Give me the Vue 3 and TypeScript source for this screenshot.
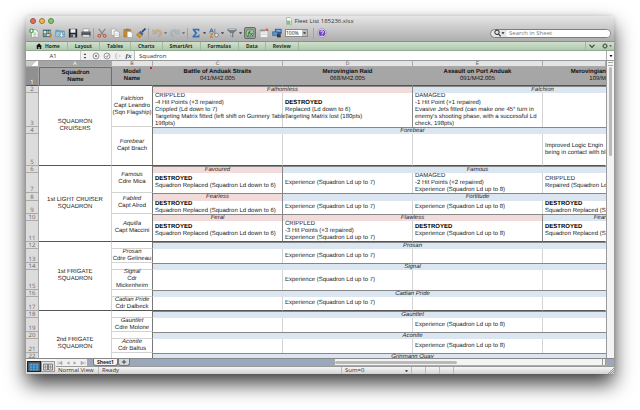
<script setup lang="ts">
import { ref } from 'vue'

interface Cell {
  lines: string[]
  kind: 'squadron' | 'model' | 'note' | 'pink' | 'blue'
  rows?: number
  cols?: number
  edge?: boolean
}
interface Row {
  n: number
  h: number
  heavy?: boolean
  cells: Cell[]
}

const squadron = (rows: number, ...lines: string[]): Cell => ({ lines, kind: 'squadron', rows })
const model = (rows: number, ...lines: string[]): Cell => ({ lines, kind: 'model', rows })
const note = (...lines: string[]): Cell => ({ lines, kind: 'note' })
const edged = (...lines: string[]): Cell => ({ lines, kind: 'note', edge: true })
const pink = (name: string, cols = 1): Cell => ({ lines: [name], kind: 'pink', cols, edge: true })
const blue = (name: string, cols = 4): Cell => ({ lines: [name], kind: 'blue', cols })

const D = 'DESTROYED'
const lost = 'Squadron Replaced (Squadron Ld down to 6)'
const lostShort = 'Squadron Replaced (S'
const up7 = 'Experience (Squadron Ld up to 7)'
const up8 = 'Experience (Squadron Ld up to 8)'

const rows: Row[] = [
  { n: 2, h: 7, cells: [squadron(4, 'SQUADRON', 'CRUISERS'), model(2, 'Falchion', 'Capt Leandro', '(Sqn Flagship)'), pink('Fathomless', 2), blue('Falchion', 2)] },
  { n: 3, h: 34, cells: [
    note('CRIPPLED', '-4 Hit Points (+3 repaired)', 'Crippled (Ld down to 7)', 'Targeting Matrix fitted (left shift on Gunnery Table,', '198pts)'),
    edged(D, 'Replaced (Ld down to 6)', 'Targeting Matrix lost (180pts)'),
    note('DAMAGED', '-1 Hit Point (+1 repaired)', 'Evasive Jets fitted (can make one 45° turn in', "enemy's shooting phase, with a successful Ld", 'check, 198pts)'),
    note()] },
  { n: 4, h: 7, cells: [model(2, 'Forebear', 'Capt Brach'), blue('Forebear')] },
  { n: 5, h: 32, heavy: true, cells: [note(), note(), note(), note('Improved Logic Engin', 'being in contact with bl')] },
  { n: 6, h: 7, cells: [squadron(6, '1st LIGHT CRUISER', 'SQUADRON'), model(2, 'Famous', 'Cdre Mica'), pink('Favoured'), blue('Famous', 3)] },
  { n: 7, h: 20, cells: [edged(D, lost), note(up7), note('DAMAGED', '-2 Hit Points (+2 repaired)', up8), note('CRIPPLED', 'Repaired (Squadron Ld')] },
  { n: 8, h: 8, cells: [model(2, 'Fabled', 'Capt Alrod'), pink('Fearless'), blue('Fortitude', 3)] },
  { n: 9, h: 13, cells: [edged(D, lost), note(up7), note(up8), note(D, lostShort)] },
  { n: 10, h: 7, cells: [model(2, 'Aquilla', 'Capt Maccini'), pink('Feral'), pink('Flawless', 2), { ...blue('Fear', 1), edge: true }] },
  { n: 11, h: 21, heavy: true, cells: [edged(D, lost), note('CRIPPLED', '-3 Hit Points (+3 repaired)', up7), edged(D, up8), note(D, lostShort)] },
  { n: 12, h: 7, cells: [squadron(6, '1st FRIGATE', 'SQUADRON'), model(1), blue('Prosan')] },
  { n: 13, h: 14, cells: [model(1, 'Prosan', 'Cdre Gelineau'), note(), note(up7), note(), note()] },
  { n: 14, h: 7, cells: [model(1), blue('Signal')] },
  { n: 15, h: 20, cells: [model(1, 'Signal', 'Cdr', 'Mickenheim'), note(), note(up7), note(), note()] },
  { n: 16, h: 7, cells: [model(1), blue('Cadian Pride')] },
  { n: 17, h: 14, heavy: true, cells: [model(1, 'Cadian Pride', 'Cdr Dalbeck'), note(), note(up7), note(), note()] },
  { n: 18, h: 7, cells: [squadron(5, '2nd FRIGATE', 'SQUADRON'), model(1), blue('Gauntlet')] },
  { n: 19, h: 14, cells: [model(1, 'Gauntlet', 'Cdre Molone'), note(), note(), note(up8), note()] },
  { n: 20, h: 7, cells: [model(1), blue('Aconite')] },
  { n: 21, h: 14, cells: [model(1, 'Aconite', 'Cdr Baltus'), note(), note(), note(up8), note()] },
  { n: 22, h: 24, cells: [model(1), blue('Grinmann Quay')] },
]

const tabs = ['Home', 'Layout', 'Tables', 'Charts', 'SmartArt', 'Formulas', 'Data', 'Review']
const heavyEnds = [4, 6]
const isHeavy = (row: Row, cell: Cell) =>
  row.heavy
  || (cell.kind === 'squadron' && heavyEnds.includes(cell.rows ?? 1))
  || (cell.kind === 'model' && [4, 10].includes(row.n))

const nameBox = ref('A1')
const formula = ref('Squadron')
const query = ref('')
</script>

<template>
  <main class="desk">
    <section class="window">
      <header class="chrome">
        <div class="title">
          <div class="lights">
            <button class="light red" aria-label="Close"></button>
            <button class="light amber" aria-label="Minimise"></button>
            <button class="light green" aria-label="Zoom"></button>
          </div>
          <svg class="doc" viewBox="0 0 6 8"><path d="M.5.5h3.5l1.5 1.7v5.3h-5z" fill="#fff" stroke="#8a9a8a" stroke-width=".6" /><path d="M1 3.5h3.5V7H1z" fill="#7fc384" /></svg>
          <h1>Fleet List 185236.xlsx</h1>
        </div>
        <div class="toolbar">
          <button aria-label="New"><svg viewBox="0 0 12 12"><path d="M3 2h5l3 3v6.5H3z" fill="#f7f7f7" stroke="#888" stroke-width=".7" /><path d="M5 6h4M5 8h4M5 10h4M7 5v6" stroke="#9cbf9c" stroke-width=".7" /><circle cx="3" cy="3.4" r="2.8" fill="#41a63c" /><path d="M3 1.8v3.2M1.4 3.4h3.2" stroke="#fff" stroke-width="1" /></svg></button>
          <button aria-label="Templates"><svg viewBox="0 0 12 12"><path d="M1 2h9.5v9H1z" fill="#42667e" /><path d="M2 3.5h3v3H2z" fill="#d6e8f4" /><path d="M5.7 3.5h2v3h-2z" fill="#e9a13b" /><path d="M8.3 3.5h2v3h-2z" fill="#7cb7e0" /><path d="M2 7.3h3v2.5H2z" fill="#79b36b" /><path d="M5.7 7.3h4.5v2.5H5.7z" fill="#c9dceb" /><path d="M9 6l2.5 1v4H9z" fill="#c77e26" /></svg></button>
          <button aria-label="Open"><svg viewBox="0 0 12 12"><path d="M.7 2h4l1 1h5.6v7.5H.7z" fill="#6ea0c2" /><path d="M.7 4.2h10.6v6.3H.7z" fill="#9cc5de" stroke="#5b8cab" stroke-width=".6" /><path d="M6.5 5h2.4v3h1.6L7.7 11.5 5 8h1.5z" fill="#eef6fb" stroke="#47738f" stroke-width=".6" /></svg></button>
          <button aria-label="Save"><svg viewBox="0 0 12 12"><path d="M1 1h10v10.4H1z" fill="#20242c" /><path d="M3 1.4h6v4.3H3z" fill="#e9edf2" /><path d="M3.2 7.5h5.6v3.9H3.2z" fill="#aeb5bd" /><path d="M4 8.2h1.6v2.6H4z" fill="#20242c" /></svg></button>
          <button aria-label="Print"><svg viewBox="0 0 12 12"><path d="M2.6 1h6.8v4H2.6z" fill="#fafafa" stroke="#777" stroke-width=".6" /><path d="M.6 4.4h10.8v4.8H.6z" fill="#34383e" /><path d="M1.4 5.4h9.2v1H1.4z" fill="#9298a0" /><path d="M2 8h8l.8 3H1.2z" fill="#e4e7ea" stroke="#666" stroke-width=".6" /></svg></button>
          <i class="rule"></i>
          <button aria-label="Cut"><svg viewBox="0 0 12 12"><path d="M2 1l5.6 7M10 1L4.4 8" stroke="#858585" stroke-width="1.3" /><circle cx="2.8" cy="9.3" r="1.7" fill="none" stroke="#bd4631" stroke-width="1.2" /><circle cx="9.2" cy="9.3" r="1.7" fill="none" stroke="#bd4631" stroke-width="1.2" /></svg></button>
          <button aria-label="Copy"><svg viewBox="0 0 12 12"><path d="M1.5 1h4.3l2 2v5.8H1.5z" fill="#f3f3f3" stroke="#909090" stroke-width=".7" /><path d="M5 3.6h4l2 2v5.8H5z" fill="#fff" stroke="#858585" stroke-width=".7" /><path d="M6.2 7h3.4M6.2 9h3.4" stroke="#aaa" stroke-width=".6" /></svg></button>
          <button aria-label="Paste"><svg viewBox="0 0 12 12"><path d="M1 1.8h8.4v9H1z" fill="#c98a2d" stroke="#8d5c17" stroke-width=".5" /><path d="M3.3.8h3.8v2.3H3.3z" fill="#7d7d7d" /><path d="M5 4.3h4.3l1.9 1.9v5.3H5z" fill="#fff" stroke="#888" stroke-width=".6" /></svg></button>
          <button aria-label="Format"><svg viewBox="0 0 12 12"><path d="M11.4.6L7 5" stroke="#26467f" stroke-width="2" /><path d="M5.2 3.6L9 7.2 7.3 8.8 3.6 5.2z" fill="#365c9c" /><path d="M3.6 5.2l3.7 3.6-2.8 2.8L.6 8.4z" fill="#d99532" stroke="#825015" stroke-width=".6" /></svg></button>
          <i class="rule"></i>
          <button class="drop faded" aria-label="Undo"><svg viewBox="0 0 12 12"><path d="M1 2l.3 5.400 5-1.300-1.800-1.200C7 3 9.600 4 9.600 6.200c0 1.500-1 2.500-2.200 3l1 1.300C10.500 9.600 11.600 8 11.500 6 11.300 2.400 6.500.600 2.900 3.700z" fill="#d8a860" stroke="#98835c" stroke-width=".5" /></svg><b></b></button>
          <button class="drop faded" aria-label="Redo"><svg viewBox="0 0 12 12"><path d="M11 2l-.3 5.400-5-1.300 1.800-1.200C5 3 2.400 4 2.400 6.200c0 1.500 1 2.500 2.200 3l-1 1.300C1.500 9.600.4 8 .5 6 .7 2.400 5.500.6 9.100 3.700z" fill="#9bc0d4" stroke="#6e8c9c" stroke-width=".5" /></svg><b></b></button>
          <i class="rule"></i>
          <button class="drop" aria-label="AutoSum"><svg viewBox="0 0 12 12"><path d="M2 1h8v2.800H8.800L8.300 2.700H5L7.700 6 4.800 9.400h3.700l.7-1.500h1.200L10 11.300H1.800V10L5 6.200 2 2.300z" fill="#3771b5" /></svg><b></b></button>
          <button class="drop" aria-label="Sort"><svg viewBox="0 0 12 12"><path d="M.8 5.500L3 .6l2.200 4.900M1.600 4h2.800" fill="none" stroke="#3b70b0" stroke-width="1.200" /><path d="M1 7h3.600L1.200 11h3.600" fill="none" stroke="#c5792f" stroke-width="1.200" /><path d="M7 1v6" stroke="#777" /><circle cx="9" cy="8.500" r="2.200" fill="#e5e5e5" stroke="#777" /></svg><b></b></button>
          <button class="drop" aria-label="Filter"><svg viewBox="0 0 12 12"><path d="M.6 1h10.800v2L7.500 6.300v5l-3-1.500V6.300L.6 3z" fill="#6f7a82" /><path d="M2 2h8" stroke="#d5dde2" /><path d="M5.500 6v4" stroke="#cdd6db" /></svg><b></b></button>
          <button class="pressed" aria-label="Formula Builder"><svg viewBox="0 0 12 12"><circle cx="6" cy="6" r="4.800" fill="#9fc79e" stroke="#4b7f4c" stroke-width=".8" /><path d="M2.800 10c1.500.3 1.600-1.500 2-4s1-3 2-2.600M3.600 5.800h2.600M6.300 6l3 3.400M9.300 6L6.100 9.400" fill="none" stroke="#28552b" stroke-width=".9" /></svg></button>
          <button aria-label="Toolbox"><svg viewBox="0 0 12 12"><path d="M1.500 2.600h9v8.800h-9z" fill="#f5f5f5" stroke="#999" stroke-width=".6" /><path d="M1.500 2h6v2h-6z" fill="#8b8b8b" /><path d="M8 .8h3v3H8z" fill="#d5604d" /><path d="M3 6h6M3 8h6" stroke="#c3c3c3" stroke-width=".7" /></svg></button>
          <button aria-label="Media"><svg viewBox="0 0 12 12"><path d="M3.500 1h8v6h-8z" fill="#28558a" /><path d="M4.500 2h6v2.600h-6z" fill="#79b2df" /><path d="M.5 4.500h6.300v4.700H.5z" fill="#5a93c6" stroke="#2d4f78" stroke-width=".6" /><path d="M6 7.300h4.500v4H6z" fill="#343b45" /></svg></button>
          <label class="zoom"><select aria-label="Zoom"><option>100%</option></select><b></b></label>
          <i class="rule"></i>
          <button aria-label="Help"><svg viewBox="0 0 12 12"><circle cx="6" cy="6" r="5.200" fill="#eee9fa" stroke="#777" stroke-width=".6" /><circle cx="6" cy="6" r="4" fill="#6e42c1" /><path d="M4.500 4.900c0-2.200 3.200-2 3.100-.1C7.600 6 6.100 5.900 6.100 7.100M6.100 8v1.100" fill="none" stroke="#fff" stroke-width="1.100" /></svg></button>
          <label class="search">
            <svg viewBox="0 0 12 8"><circle cx="4" cy="3.300" r="2.200" fill="none" stroke="#222" stroke-width="1" /><path d="M5.600 5l2 2.300" stroke="#222" stroke-width="1.100" /><path d="M8.500 3.200h3L10 5.200z" fill="#222" /></svg>
            <input v-model="query" type="text" placeholder="Search in Sheet" aria-label="Search in Sheet">
          </label>
        </div>
      </header>

      <nav class="ribbon">
        <button v-for="tab in tabs" :key="tab">
          <svg v-if="tab === 'Home'" viewBox="0 0 6 6"><path d="M3 .3L6 3.300H5.200V6H3.700V4H2.300v2H.8V3.300H0z" fill="#111" /></svg>{{ tab }}
        </button>
        <button class="end" aria-label="Collapse ribbon"><svg viewBox="0 0 6 6"><path d="M.5 1.600L3 4.400l2.500-2.800" fill="none" stroke="#444" stroke-width="1.100" /></svg></button>
        <button class="gear" aria-label="Ribbon options"><svg viewBox="0 0 10 6"><circle cx="3" cy="3" r="1.700" fill="none" stroke="#444" stroke-width=".8" /><path d="M3 0v1M3 5v1M0 3h1M5 3h1M.9.900l.7.7M4.400 4.400l.7.7M5.100.9l-.7.7M.9 5.100l.7-.7" stroke="#444" stroke-width=".8" /><path d="M7.300 2.300h2.400L8.500 4z" fill="#444" /></svg></button>
      </nav>

      <div class="formula">
        <input v-model="nameBox" class="name" type="text" aria-label="Name box">
        <button class="step" aria-label="Browse names"><svg viewBox="0 0 6 8"><path d="M1.800 3L3 1.200 4.200 3zM1.800 5L3 6.800 4.200 5z" fill="#333" /></svg></button>
        <button aria-label="Cancel"><svg viewBox="0 0 8 8"><circle cx="4" cy="4" r="3" fill="none" stroke="#888" stroke-width=".8" /><path d="M2.800 2.800l2.400 2.400M5.200 2.800L2.800 5.200" stroke="#888" stroke-width=".9" /></svg></button>
        <button aria-label="Enter"><svg viewBox="0 0 8 8"><circle cx="4" cy="4" r="3" fill="none" stroke="#888" stroke-width=".8" /><path d="M2.500 4l1.200 1.300 2-2.800" fill="none" stroke="#888" stroke-width=".9" /></svg></button>
        <button aria-label="Parentheses"><svg viewBox="0 0 8 8"><path d="M3 1a4 4 0 0 0 0 6M4.500 4h2" fill="none" stroke="#aaa" stroke-width=".8" /></svg></button>
        <button class="fx" aria-label="Insert function"><em>fx</em></button>
        <input v-model="formula" class="entry" type="text" aria-label="Formula">
        <button class="more" aria-label="Expand formula bar"><svg viewBox="0 0 6 8"><path d="M1.500 3h3L3 5.200z" fill="#111" /></svg></button>
      </div>

      <div class="body">
        <div class="sheet">
          <table>
            <colgroup><col class="c0"><col class="cA"><col class="cB"><col class="cN"><col class="cN"><col class="cN"><col></colgroup>
            <thead>
              <tr class="letters"><th class="corner"></th><th class="on">A</th><th>B</th><th>C</th><th>D</th><th>E</th><th></th></tr>
              <tr class="heads">
                <th class="num on">1</th>
                <th class="active"><div class="txt">Squadron<br>Name</div></th>
                <th class="flag"><div class="txt">Model<br>Name</div></th>
                <th><div class="txt">Battle of Anduak Straits<br><span>041/M42.005</span></div></th>
                <th><div class="txt">Merovingian Raid<br><span>068/M42.005</span></div></th>
                <th><div class="txt">Assault on Port Anduak<br><span>091/M42.005</span></div></th>
                <th class="partial"><div class="txt">Merovingian<br><span>109/M</span></div></th>
              </tr>
            </thead>
            <tbody>
              <tr v-for="row in rows" :key="row.n" :style="{ height: row.h + 'px' }">
                <th class="num">{{ row.n }}</th>
                <td
                  v-for="(cell, i) in row.cells" :key="i"
                  :rowspan="cell.rows ?? 1" :colspan="cell.cols ?? 1"
                  :class="[cell.kind, { edge: cell.edge, heavy: isHeavy(row, cell), onward: cell.kind === 'blue' && cell.cols !== 1, last: cell.kind === 'blue' && cell.cols === 1 }]"
                >
                  <div v-if="cell.lines.length" class="txt">
                    <div v-for="(line, k) in cell.lines" :key="k" :class="{ strong: line === D }">{{ line }}</div>
                  </div>
                </td>
              </tr>
            </tbody>
          </table>
        </div>
        <div class="vscroll"><i class="split"></i><i class="thumb"></i></div>
      </div>

      <footer class="foot">
        <div class="views">
          <button class="view on" aria-label="Normal view"><svg viewBox="0 0 10 8"><path d="M.5.5h9v7h-9z" fill="#4fa3d9" /><path d="M.5 3h9M.5 5.300h9M3.500.5v7M6.500.5v7" stroke="#2b6c9c" stroke-width=".6" /></svg></button>
          <button class="view" aria-label="Page layout"><svg viewBox="0 0 10 8"><path d="M.5 1h4v6h-4zM5.500 1h4v6h-4z" fill="#ddd" stroke="#666" stroke-width=".8" /><path d="M1 4h3M6 4h3M2.500 2v4M7.500 2v4" stroke="#777" stroke-width=".6" /></svg></button>
        </div>
        <div class="rails">
          <div class="tabs">
            <div class="nav">
              <button aria-label="First sheet"><svg viewBox="0 0 6 6"><path d="M1 1.200v3.600M5 1.200L2 3l3 1.800z" fill="#aaa" stroke="#aaa" stroke-width=".6" /></svg></button>
              <button aria-label="Previous sheet"><svg viewBox="0 0 6 6"><path d="M4.500 1.200L1.500 3l3 1.800z" fill="#aaa" /></svg></button>
              <button aria-label="Next sheet"><svg viewBox="0 0 6 6"><path d="M1.500 1.200l3 1.800-3 1.800z" fill="#aaa" /></svg></button>
              <button aria-label="Last sheet"><svg viewBox="0 0 6 6"><path d="M5 1.200v3.600M1 1.200L4 3 1 4.800z" fill="#aaa" stroke="#aaa" stroke-width=".6" /></svg></button>
            </div>
            <button class="tab">Sheet1</button>
            <button class="tab add" aria-label="Add sheet"><svg viewBox="0 0 6 6"><path d="M3 .8v4.400M.8 3h4.400" stroke="#444" stroke-width="1" /></svg></button>
            <div class="hscroll"><i class="thumb"></i><i class="grip"></i></div>
          </div>
          <div class="status">
            <span class="mode">Normal View</span><span class="ready">Ready</span><span class="sum">Sum=0<b></b></span><i></i><i></i><i></i>
            <svg class="resize" viewBox="0 0 6 6"><path d="M0 6l6-6M2 6l4-4M4 6l2-2" stroke="#777" stroke-width=".7" /></svg>
          </div>
        </div>
      </footer>
    </section>
  </main>
</template>

<style>
body { margin: 0; background: #fff; }
</style>

<style scoped>
* { box-sizing: border-box; }
.desk { height: 100vh; padding: 16px 26px 36px; overflow: hidden; background: #fff; font-family: "Open Sans", sans-serif; font-size: 6px; line-height: 8px; color: #333; }
.window { display: flex; flex-direction: column; height: 100%; background: #fff; border-radius: 3px 3px 0 0; box-shadow: 0 10px 20px rgba(0, 0, 0, .75), 0 0 4px rgba(0, 0, 0, .15); }
button { display: flex; align-items: center; justify-content: center; margin: 0; padding: 0; border: 0; background: none; font: inherit; color: inherit; }
input, select { margin: 0; padding: 0; border: 0; border-radius: 0; outline: 0; background: none; font: inherit; color: inherit; min-width: 0; }
svg { display: block; flex: none; }
b { border: 1px solid transparent; border-top: 2px solid #555; border-bottom: 0; flex: none; width: 3px; height: 2px; }

.chrome { flex: none; border-radius: 3px 3px 0 0; background: linear-gradient(#e6e6e6, #cfcfcf 40%, #aeaeae); border-bottom: 1px solid #8d8d8d; }
.title { display: grid; grid-template-columns: 1fr auto auto 1fr; align-items: center; height: 10px; column-gap: 2px; }
h1 { margin: 0; font-size: 6px; font-weight: 400; line-height: 10px; color: #333; }
.lights { display: flex; gap: 3px; padding-left: 4px; }
.light { width: 6px; height: 6px; border-radius: 50%; border: 1px solid #8b5a52; }
.red { background: #f0665d; }
.amber { background: #f5b64b; border-color: #9c7538; }
.green { background: #86c765; border-color: #5b8748; }
.doc { width: 6px; height: 8px; }
.toolbar { display: flex; align-items: center; gap: 2px; height: 15px; padding: 0 3px 1px 2px; }
.toolbar button svg { width: 10px; height: 10px; }
.toolbar button { flex: none; width: 11px; height: 12px; }
.toolbar .drop { width: 16px; gap: 2px; }
.faded { opacity: .65; }
.toolbar .pressed { width: 12px; background: #9b9b9b; border: 1px solid #6c6c6c; border-radius: 2px; }
.rule { flex: none; width: 1px; height: 11px; background: #a4a4a4; }
.zoom { display: flex; align-items: center; width: 23px; height: 8px; margin: 0 3px 0 1px; padding-right: 1px; border: 1px solid #8a8a8a; background: linear-gradient(90deg, #fff 16px, #bbb 16px); }
.zoom select { appearance: none; flex: 1; width: 16px; height: 6px; font-size: 5px; line-height: 6px; color: #222; }
.search { display: flex; align-items: center; width: 121px; height: 9px; margin-left: auto; padding-left: 2px; border: 1px solid #7d7d7d; border-radius: 5px; background: #e6e6e6; }
.search svg { width: 12px; height: 8px; }
.search input { flex: 1; height: 7px; margin-left: 1px; padding-left: 3px; border-radius: 4px; background: #fff; line-height: 7px; }
.search input::placeholder { color: #777; opacity: 1; }

.ribbon { flex: none; display: flex; height: 9px; padding-left: 3px; background: linear-gradient(#cfe0cd, #aec9ac); border-bottom: 1px solid #93a892; font-size: 5px; font-weight: 700; color: #263026; }
.ribbon button { padding: 0 7px; gap: 3px; border-right: 1px solid #a2b9a0; }
.ribbon svg { width: 6px; height: 6px; }
.ribbon .end { margin-left: auto; padding: 0 3px; border-left: 1px solid #a2b9a0; border-right: 0; }
.ribbon .gear { padding: 0 2px 0 4px; border: 0; }
.ribbon .gear svg { width: 10px; }

.formula { flex: none; display: flex; height: 10px; background: #f1f1f1; border-bottom: 1px solid #999; }
.formula svg { width: 8px; height: 8px; }
.formula button { width: 11px; }
.name { width: 54px; text-align: center; background: #fff; }
.formula .step { width: 8px; margin-right: 2px; border-left: 1px solid #ccc; }
.fx { font-family: "Liberation Serif", serif; font-weight: 700; font-size: 7px; }
.entry { flex: 1; padding-left: 4px; border-left: 1px solid #bbb; background: #fff; }
.formula .more { width: 8px; border-left: 1px solid #aaa; background: #fff; }

.body { flex: 1; display: flex; min-height: 0; }
.sheet { flex: 1; min-width: 0; overflow: hidden; font-family: "Liberation Sans", sans-serif; line-height: 7px; color: #222; text-rendering: geometricPrecision; }
table { table-layout: fixed; width: 100%; border-collapse: separate; border-spacing: 0; }
.c0 { width: 13px; }
.cA { width: 73px; }
.cB { width: 41px; }
.cN { width: 130px; }
th, td { padding: 0; white-space: nowrap; vertical-align: middle; text-align: center; border-right: 1px solid #d3d3d3; border-bottom: 1px solid #d3d3d3; }
.letters { height: 6px; }
.letters th { height: 6px; padding-top: 1px; background: #e4e4e4; font-size: 5px; line-height: 4px; font-weight: 400; color: #555; border-color: #aaa; }
.letters .on { background: #a5a5a5; color: #fff; }
.letters .corner { background: linear-gradient(135deg, #ccc 60%, #fff 60%); }
.heads { height: 19px; }
.heads th { background: #a6a6a6; color: #111; border-right-color: #a6a6a6; border-bottom: 1px solid #555; }
.heads span { font-weight: 400; }
.heads .active { border: 1px solid #4a6fc4; }
.heads .partial { text-align: right; border-right: 0; }
.flag { position: relative; }
.flag::after { content: ""; position: absolute; top: 0; right: 0; border: 1px solid #e02020; }
.num { vertical-align: bottom; background: #dcdcdc; border-color: #aaa; font-family: "Open Sans", sans-serif; font-weight: 400; line-height: 6px; color: #666; }
.heads .num.on { background: #909090; color: #fff; }
tbody tr:last-child .num { vertical-align: top; }
.txt { margin: -1px 0; }
.note { text-align: left; padding-left: 2px; border-bottom: 0; }
.note:last-child { border-right-color: transparent; }
.model { border-right-color: #777; }
.model .txt > :first-child { font-style: italic; }
.pink, .blue { vertical-align: top; font-style: italic; border-bottom: 0; border-top: 1px solid #888; }
.pink .txt, .blue .txt { margin: 0 0 -1px; }
.pink { background: #f2dcdb; }
.blue { background: #dce6f1; border-right: 0; }
.onward { padding-left: 66px; }
.last { text-align: right; }
.edge { border-right-color: #888; }
.heavy { border-bottom: 1px solid #555; }
.strong { font-weight: 700; color: #000; }

.vscroll { flex: none; display: flex; flex-direction: column; align-items: center; width: 8px; background: #f4f4f4; border-left: 1px solid #999; }
.split { width: 5px; height: 4px; margin: 1px 0; border-top: 1px solid #aaa; border-bottom: 1px solid #aaa; }
.vscroll .thumb { width: 3px; height: 30%; border-radius: 2px; background: #b9b9b9; }

.foot { flex: none; display: flex; height: 16px; background: linear-gradient(#fafafa, #d4d4d4); border-top: 1px solid #888; }
.views { display: flex; align-items: center; flex: none; width: 30px; padding: 0 1px; }
.view { width: 14px; height: 11px; border: 1px solid #999; background: #e6e6e6; }
.view.on { background: #555; border-color: #222; }
.view svg { width: 10px; height: 8px; }
.rails { flex: 1; display: flex; flex-direction: column; min-width: 0; }
.tabs { display: flex; height: 7px; background: #9aa8be; }
.nav { display: flex; justify-content: space-around; width: 31px; margin-right: 6px; background: #f0f0f0; }
.nav svg, .add svg { width: 6px; height: 6px; }
.tab { padding: 0 3px; background: #f6f6f6; border: 1px solid #777; border-top: 0; border-radius: 0 0 3px 3px; font-size: 5px; font-weight: 700; line-height: 6px; color: #222; }
.add { padding: 0 2px; background: #d5d9e0; }
.hscroll { display: flex; align-items: center; width: 49%; margin-left: auto; margin-right: 7px; background: #f4f4f4; border: 1px solid #aaa; border-top: 0; }
.hscroll .thumb { width: 45%; height: 3px; border-radius: 2px; background: #b9b9b9; }
.hscroll .grip { width: 4px; height: 6px; margin-left: auto; border-left: 1px solid #999; border-right: 1px solid #999; }
.status { display: flex; flex: 1; align-items: center; padding-left: 2px; border-top: 1px solid #999; line-height: 7px; background: linear-gradient(#f6f6f6, #d2d2d2); }
.status > span, .status > i { border-right: 1px solid #bbb; height: 7px; }
.mode { width: 41px; }
.ready { flex: 1; padding-left: 3px; }
.sum { display: flex; align-items: center; justify-content: space-between; width: 70px; padding: 0 3px; }
.status > i { width: 14px; }
.resize { width: 6px; height: 6px; margin-left: 154px; }
</style>
